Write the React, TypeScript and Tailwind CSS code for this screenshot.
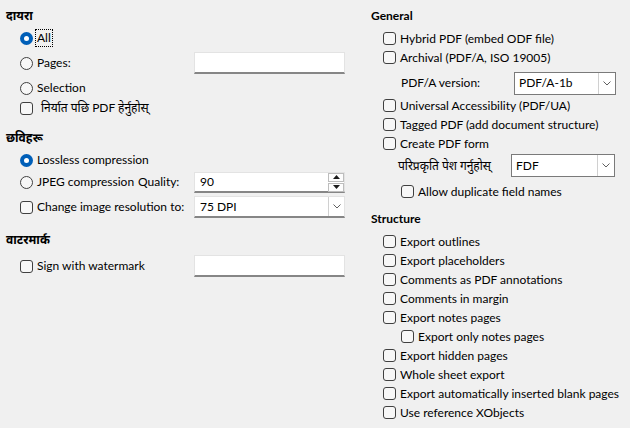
import React from "react";

const Radio = ({ checked }: { checked?: boolean }) =>
  checked ? (
    <span className="w-[13px] h-[13px] rounded-full bg-[#005fb8] flex items-center justify-center shrink-0">
      <span className="w-[5px] h-[5px] rounded-full bg-white" />
    </span>
  ) : (
    <span className="w-[13px] h-[13px] rounded-full border border-[#404040] bg-[#f7f7f7] shrink-0" />
  );

const Check = () => (
  <span className="w-[13px] h-[13px] rounded-[3px] border border-[#404040] bg-[#f7f7f7] shrink-0" />
);

const Chevron = () => (
  <svg width="8" height="5" viewBox="0 0 8 5" className="block">
    <polyline points="0.5,0.5 4,4 7.5,0.5" fill="none" stroke="#606060" strokeWidth="1" />
  </svg>
);

const TextBox = ({ value }: { value?: string }) => (
  <div className="w-[151px] h-[22px] bg-white border border-[#e3e3e3] border-b-2 border-b-[#868686] flex items-center px-[5px] shrink-0">
    {value}
  </div>
);

const CheckRow = ({ label, indent }: { label: string; indent?: boolean }) => (
  <div className={`h-[19px] flex items-center gap-[4px] ${indent ? "pl-[30px]" : "pl-[12px]"}`}>
    <Check />
    <span>{label}</span>
  </div>
);

export default function App() {
  return (
    <div
      className="w-[630px] h-[428px] bg-[#f0f0f0] text-black text-[12px] leading-[16px] flex overflow-hidden whitespace-nowrap"
      style={{ fontFamily: 'Lato, "Noto Sans Devanagari", "Noto Sans", sans-serif' }}
    >
      {/* Left column */}
      <div className="w-[365px] pl-[6px] flex flex-col">
        <div className="mt-[6px] h-[20px] flex items-center font-bold">दायरा</div>
        <div className="mt-[2px] h-[20px] flex items-center pl-[14px] gap-[3px]">
          <Radio checked />
          <span className="outline outline-1 outline-dotted outline-black px-[1px]">All</span>
        </div>
        <div className="mt-[4px] h-[22px] flex items-center pl-[14px]">
          <Radio />
          <span className="ml-[4px] w-[157px]">Pages:</span>
          <TextBox />
        </div>
        <div className="mt-[4px] h-[20px] flex items-center pl-[14px] gap-[4px]">
          <Radio />
          <span>Selection</span>
        </div>
        <div className="h-[20px] flex items-center pl-[14px] gap-[8px]">
          <Check />
          <span>निर्यात पछि PDF हेर्नुहोस्</span>
        </div>

        <div className="mt-[10px] h-[20px] flex items-center font-bold">छविहरू</div>
        <div className="mt-[2px] h-[20px] flex items-center pl-[14px] gap-[4px]">
          <Radio checked />
          <span>Lossless compression</span>
        </div>
        <div className="mt-[1px] h-[22px] flex items-center pl-[14px]">
          <Radio />
          <span className="ml-[4px] w-[101px]">JPEG compression</span>
          <span className="w-[56px]">Quality:</span>
          <div className="w-[151px] h-[21px] bg-white border border-[#e3e3e3] border-b-2 border-b-[#868686] flex items-center pl-[5px] relative shrink-0">
            <span>90</span>
            <div className="absolute right-[0px] top-[0px] w-[16px] h-[19px] flex flex-col gap-[1px]">
              <div className="h-[9px] border border-[#bdbdbd] bg-[#fdfdfd] flex items-center justify-center">
                <svg width="7" height="4" viewBox="0 0 7 4"><polygon points="0,4 3.5,0 7,4" fill="#1a1a1a" /></svg>
              </div>
              <div className="h-[9px] border border-[#bdbdbd] bg-[#fdfdfd] flex items-center justify-center">
                <svg width="7" height="4" viewBox="0 0 7 4"><polygon points="0,0 3.5,4 7,0" fill="#1a1a1a" /></svg>
              </div>
            </div>
          </div>
        </div>
        <div className="mt-[3px] h-[22px] flex items-center pl-[14px]">
          <Check />
          <span className="ml-[4px] w-[157px]">Change image resolution to:</span>
          <div className="w-[151px] h-[22px] bg-white border border-[#e3e3e3] border-b-2 border-b-[#868686] flex items-center pl-[5px] relative shrink-0">
            <span>75 DPI</span>
            <div className="absolute right-0 top-0 bottom-0 w-[16px] border-l border-[#d0d0d0] flex items-center justify-center">
              <Chevron />
            </div>
          </div>
        </div>

        <div className="mt-[12px] h-[20px] flex items-center font-bold">वाटरमार्क</div>
        <div className="mt-[5px] h-[22px] flex items-center pl-[14px]">
          <Check />
          <span className="ml-[4px] w-[157px]">Sign with watermark</span>
          <TextBox />
        </div>
      </div>

      {/* Right column */}
      <div className="flex-1 pl-[6px] flex flex-col">
        <div className="mt-[6px] h-[20px] flex items-center font-bold">General</div>
        <div className="mt-[3px]">
          <CheckRow label="Hybrid PDF (embed ODF file)" />
          <CheckRow label="Archival (PDF/A, ISO 19005)" />
        </div>
        <div className="mt-[5px] h-[22px] flex items-center pl-[30px]">
          <span className="w-[113px]">PDF/A version:</span>
          <div className="w-[102px] h-[23px] bg-white border border-[#7a7a7a] flex items-center pl-[4px] relative">
            <span>PDF/A-1b</span>
            <div className="absolute right-0 top-0 bottom-0 w-[17px] border-l border-[#d0d0d0] flex items-center justify-center">
              <Chevron />
            </div>
          </div>
        </div>
        <div className="mt-[2px]">
          <CheckRow label="Universal Accessibility (PDF/UA)" />
          <CheckRow label="Tagged PDF (add document structure)" />
          <CheckRow label="Create PDF form" />
        </div>
        <div className="mt-[1px] h-[23px] flex items-center pl-[27px]">
          <span className="w-[113px]">परिप्रकृति पेश गर्नुहोस्</span>
          <div className="w-[104px] h-[23px] bg-white border border-[#7a7a7a] flex items-center pl-[4px] relative">
            <span>FDF</span>
            <div className="absolute right-0 top-0 bottom-0 w-[17px] border-l border-[#d0d0d0] flex items-center justify-center">
              <Chevron />
            </div>
          </div>
        </div>
        <div className="mt-[5px]">
          <CheckRow label="Allow duplicate field names" indent />
        </div>

        <div className="mt-[8px] h-[20px] flex items-center font-bold">Structure</div>
        <div className="mt-[3px]">
          <CheckRow label="Export outlines" />
          <CheckRow label="Export placeholders" />
          <CheckRow label="Comments as PDF annotations" />
          <CheckRow label="Comments in margin" />
          <CheckRow label="Export notes pages" />
          <CheckRow label="Export only notes pages" indent />
          <CheckRow label="Export hidden pages" />
          <CheckRow label="Whole sheet export" />
          <CheckRow label="Export automatically inserted blank pages" />
          <CheckRow label="Use reference XObjects" />
        </div>
      </div>
    </div>
  );
}
